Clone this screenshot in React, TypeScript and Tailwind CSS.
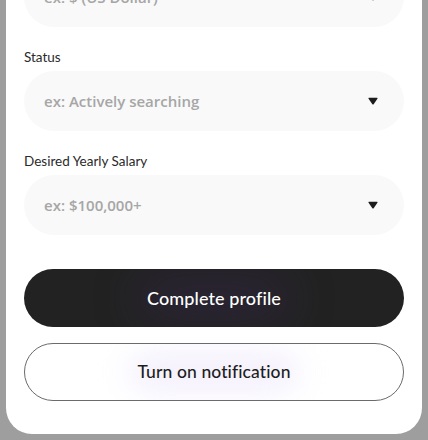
import React from "react";

function Caret() {
  return (
    <svg width="10" height="8" viewBox="0 0 10 8" className="shrink-0">
      <path d="M1 0.8 H9 Q9.9 0.8 9.4 1.7 L5.8 6.9 Q5 7.9 4.2 6.9 L0.6 1.7 Q0.1 0.8 1 0.8 Z" fill="#1c1c1c" />
    </svg>
  );
}

function SelectField({ placeholder }: { placeholder: string }) {
  return (
    <div className="h-[60px] rounded-full bg-[#f9f9f9] flex items-center justify-between pl-5 pr-[26px]">
      <span className="pt-px text-[15px] font-semibold text-[#a6a6a6]" style={{ fontFamily: "'Open Sans', 'Noto Sans', sans-serif" }}>
        {placeholder}
      </span>
      <Caret />
    </div>
  );
}

function Label({ children }: { children: React.ReactNode }) {
  return <div className="h-5 mt-5 mb-1 flex items-center text-[13.5px] text-[#2a2a2a] font-normal">{children}</div>;
}

export default function App() {
  return (
    <div className="w-[428px] h-[440px] bg-[#9e9e9e] px-[6px] pb-[6px] overflow-hidden" style={{ fontFamily: "Lato, 'Noto Sans', sans-serif" }}>
      <div className="h-full bg-white rounded-b-[26px] px-[18px] overflow-hidden">
        <div className="-mt-[33px]">
          <SelectField placeholder="ex: $ (US Dollar)" />
        </div>

        <Label>Status</Label>
        <SelectField placeholder="ex: Actively searching" />

        <Label>Desired Yearly Salary</Label>
        <SelectField placeholder="ex: $100,000+" />

        <button className="relative mt-[34px] w-full h-[58px] rounded-full bg-[#222222] flex items-center justify-center overflow-hidden">
          <span className="absolute left-1/2 top-1/2 -translate-x-1/2 -translate-y-1/2 w-[150px] h-[30px] rounded-full bg-[#3a2a55] blur-xl opacity-60" />
          <span className="relative text-white text-[18px] font-medium tracking-[0.1px]">Complete profile</span>
        </button>

        <button className="relative mt-4 w-full h-[58px] rounded-full border border-[#6b6b6b] bg-white flex items-center justify-center overflow-hidden">
          <span className="absolute left-1/2 top-1/2 -translate-x-1/2 -translate-y-1/2 w-[170px] h-[34px] rounded-full bg-[#ece6fb] blur-lg opacity-70" />
          <span className="relative text-[#1e1e1e] text-[17.5px] font-medium tracking-[0.1px]">Turn on notification</span>
        </button>
      </div>
    </div>
  );
}
